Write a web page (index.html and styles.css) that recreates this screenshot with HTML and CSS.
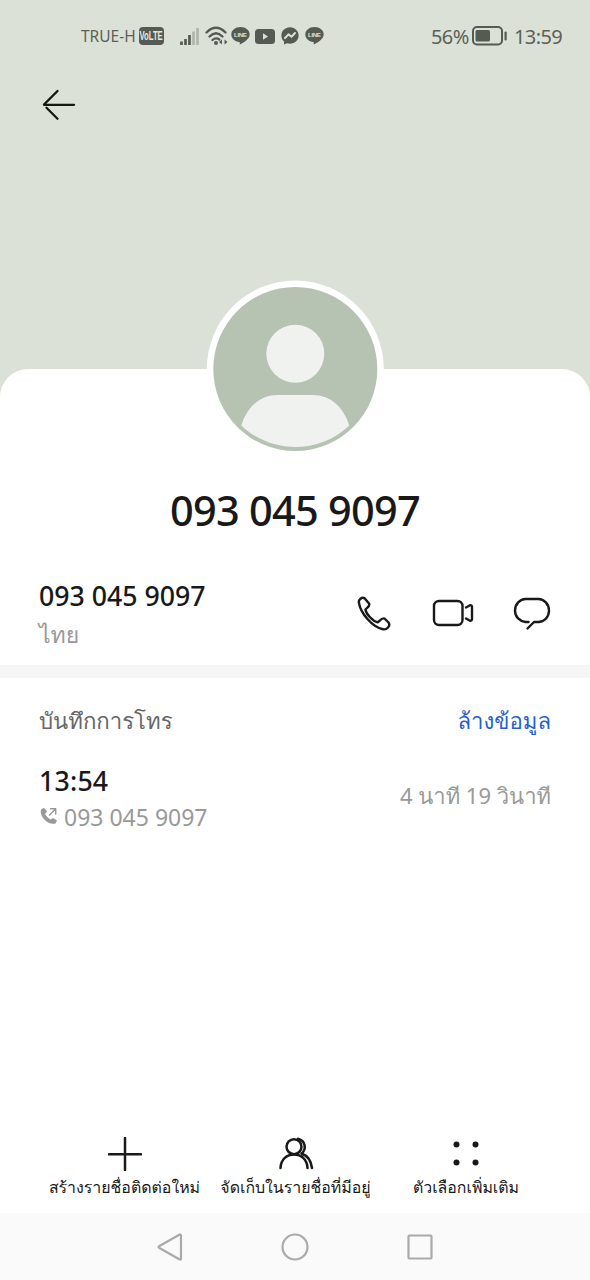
FILE: index.html
```html
<!DOCTYPE html>
<html lang="th">
<head>
<meta charset="utf-8">
<title>093 045 9097</title>
<link rel="stylesheet" href="styles.css">
</head>
<body>
<main class="screen">
  <header class="hero">
    <div class="status">
      <span class="carrier">TRUE-H</span>
      <span class="volte"><span>VoLTE</span></span>
      <svg class="signal" width="19" height="19" viewBox="0 0 19 19"><path d="M1.500 18v-3.500M5.500 18v-6M9.500 18V8" /><path class="faint" d="M13.500 18V4.500M17.500 18V1"/></svg>
      <svg class="wifi" width="23" height="20" viewBox="0 0 23 20"><path d="M1.500 6.500Q11 -3 20.500 6.500M4.500 10.500Q11 4 17.500 10.500M7.500 14Q11 11 14.300 13.500"/><circle cx="11" cy="17" r="2"/><path class="solid" d="M14 16l3-2.500v5zM22.500 16l-3-2.500v5z"/></svg>
      <svg class="line" width="19" height="18" viewBox="0 0 19 18"><path d="M9.500 0C4.300 0 .3 3.300.3 7.500c0 3.800 3.500 7 8 7.500.7.200.5 1.500.4 2.500 4-1.700 10-5.700 10-10C18.700 3.300 14.700 0 9.500 0z"/><text x="9.500" y="10" textLength="13">LINE</text></svg>
      <svg class="tube" width="20" height="15" viewBox="0 0 20 15"><rect width="20" height="15" rx="3.500"/><path class="cut" d="M8 4.300l5 3.200-5 3.200z"/></svg>
      <svg class="mess" width="18" height="18" viewBox="0 0 18 18"><path d="M9 .2C4 .2.400 3.800.400 8.500c0 2.500 1 4.500 2.600 6V17.500l2.800-1.300c1 .3 2 .5 3.200.5 5 0 8.600-3.600 8.600-8.200S14 .2 9 .2z"/><path class="stroke" d="M4 11l3.500-3.600 3 2.300L14 6"/></svg>
      <svg class="line" width="19" height="18" viewBox="0 0 19 18"><path d="M9.500 0C4.300 0 .3 3.300.3 7.500c0 3.800 3.500 7 8 7.500.7.200.5 1.500.4 2.500 4-1.700 10-5.700 10-10C18.700 3.300 14.700 0 9.500 0z"/><text x="9.500" y="10" textLength="13">LINE</text></svg>
      <span class="percent">56%</span>
      <svg class="battery" width="36" height="20" viewBox="0 0 36 20"><rect class="case" x="1" y="1" width="29" height="17.500" rx="4"/><rect x="3.500" y="4" width="14.500" height="11.500" rx="1.500"/><rect x="32.500" y="5.500" width="2.200" height="9" rx="1"/></svg>
      <span class="clock">13:59</span>
    </div>
    <svg class="back" width="34" height="32" viewBox="0 0 34 32"><path d="M2 15.800H32M15.500 2L2 15.500M4.500 18.800l11 11"/></svg>
  </header>
  <section class="sheet">
    <svg class="avatar" width="178" height="178" viewBox="0 0 178 178"><circle class="ring" cx="89.300" cy="89" r="88.500"/><circle class="disc" cx="89.300" cy="89" r="82"/><circle class="figure" cx="89.300" cy="73.700" r="29"/><path class="figure" d="M35.300 145.500C41.300 126 55.300 115 71.300 115h36c16 0 30 11 36 30.500C128.300 160 108.300 167 89.300 167s-39-7-54-21.500z"/></svg>
    <h1 class="title"><span>093 045 9097</span></h1>
    <div class="contact">
      <div class="who"><div class="number">093 045 9097</div><div class="country">ไทย</div></div>
      <svg class="act" width="36" height="36" viewBox="0 0 36 36"><path d="M3 7C2 4 6 0 9 2.700L13 7.500C14.500 10 11.500 11.300 9.500 13.500C10 18 17 25.300 21.700 26.300C24 24.500 26 21.500 28.500 22.500L32.500 26.500C35 30 30.500 34 27 33.300C16 31 4.500 17 3 7Z"/></svg>
      <svg class="act camera" width="42" height="28" viewBox="0 0 42 28"><rect x="2" y="2" width="28.500" height="24" rx="5"/><path d="M34 8.500L38 6.200Q40 6 40 8V20Q40 22 38 21.800L34 19.500"/></svg>
      <svg class="act bubble" width="38" height="34" viewBox="0 0 38 34"><path d="M15.500 25H12.500C6 24 2 19.500 2 13.800C2 7.200 7 2 12.500 2H25.500C31 2 36 7.200 36 13.800C36 20 31 25 25.500 25H21L14.500 31.500"/></svg>
    </div>
  </section>
  <section class="log">
    <div class="loghead"><span class="logtitle">บันทึกการโทร</span><span class="clear">ล้างข้อมูล</span></div>
    <div class="entry">
      <div><div class="time">13:54</div>
      <div class="called"><svg width="18" height="18" viewBox="0 0 18 18"><path class="hand" d="M1 2.500L4 .8 7 4.500 5 7.300Q7 11 10.500 12.500L13 11 17 13.500 15.500 16.500C8 18.500-1 9.500 1 2.500z"/><path class="arrow" d="M9.500 8L15.500 2M10.500 1.800h5.200V7"/></svg><span>093 045 9097</span></div></div>
      <div class="duration">4 นาที 19 วินาที</div>
    </div>
  </section>
  <footer class="actions">
    <div class="action"><svg width="34" height="34" viewBox="0 0 34 34"><path d="M17 1V33M1 17.300H15M19 17.300H33"/></svg><span class="label l1">สร้างรายชื่อติดต่อใหม่</span></div>
    <div class="action"><svg width="36" height="34" viewBox="0 0 36 34"><circle cx="16" cy="9.700" r="7.500"/><path d="M2.500 31C3 22 9 17.500 16 17.500S29 22 29.500 31M20 1.800C28 4 28.500 12.500 23.500 16.500C29 18.500 33 23 34 31"/></svg><span class="label l2">จัดเก็บในรายชื่อที่มีอยู่</span></div>
    <div class="action"><svg class="dots" width="34" height="34" viewBox="0 0 34 34"><circle cx="7.500" cy="7.500" r="3"/><circle cx="26.500" cy="7.500" r="3"/><circle cx="7.500" cy="25.500" r="3"/><circle cx="26.500" cy="25.500" r="3"/></svg><span class="label l3">ตัวเลือกเพิ่มเติม</span></div>
  </footer>
  <nav class="nav">
    <svg width="28" height="28" viewBox="0 0 28 28"><path d="M25 2.200V25.800Q24.500 27 23.300 26.300L3 14.700Q2 14 3 13.300L23.300 1.700Q24.500 1 25 2.200z"/></svg>
    <svg width="28" height="28" viewBox="0 0 28 28"><circle cx="14" cy="14" r="12.500"/></svg>
    <svg width="28" height="28" viewBox="0 0 28 28"><rect x="2.500" y="2.500" width="23" height="23" rx="1"/></svg>
  </nav>
</main>
</body>
</html>
```
FILE: styles.css
```css
* { box-sizing: border-box; }
body { margin: 0; font-family: "Noto Sans", "Loma", sans-serif; color: #191919; background: #fff; }
svg { display: block; flex: none; fill: none; stroke-linecap: round; stroke-linejoin: round; }
span, .number, .country, .time, .duration { white-space: nowrap; }
.screen { width: 590px; height: 1280px; display: flex; flex-direction: column; overflow: hidden; background: #fff; }
.hero { height: 369px; flex: none; background: #dbe1d6; }
.status { height: 72px; padding-left: 81px; display: flex; align-items: center; color: #5b6158; }
.status svg { fill: #555b53; stroke: none; }
.carrier { width: 58px; font-size: 15.500px; line-height: 18px; padding-bottom: 1px; }
.volte { width: 25px; height: 18px; margin-right: 16px; border-radius: 4px; background: #555b53; color: #e5eae1; font: bold 12px/18px "Liberation Sans", sans-serif; display: flex; justify-content: center; }
.volte span { transform: scaleX(0.640); }
.status .signal { margin: 0 6px 0 0; stroke: #555b53; stroke-width: 2.700; stroke-linecap: butt; }
.status .signal .faint { stroke: #b0b6ac; }
.status .wifi { margin-right: 3px; }
.status .wifi path { fill: none; stroke: #555b53; stroke-width: 2.300; }
.status .wifi .solid { fill: #555b53; stroke: none; }
.line { margin-right: 5px; }
.line text { fill: #dbe1d6; font: bold 6.200px "Liberation Sans", sans-serif; text-anchor: middle; }
.tube { margin-right: 6px; }
.status .cut { fill: #dbe1d6; }
.mess { margin-right: 6px; }
.status .stroke { fill: none; stroke: #dbe1d6; stroke-width: 2; }
.percent { margin-left: 102px; width: 41px; font-size: 20px; letter-spacing: -0.600px; }
.status .battery .case { fill: none; stroke: #555b53; stroke-width: 2; }
.battery { margin-right: 6px; }
.clock { font-size: 20px; letter-spacing: -0.600px; }
.back { margin: 17px 0 0 42px; stroke: #111a10; stroke-width: 2.300; }
.sheet { height: 296px; flex: none; background: linear-gradient(#dbe1d6 30px, #fff 30px); position: relative; display: flex; flex-direction: column; align-items: center; }
.sheet::before { content: ""; position: absolute; inset: 0; background: #fff; border-radius: 28px 28px 0 0; }
.avatar { position: relative; margin-top: -89px; }
.ring { fill: #fff; }
.disc { fill: #b6c2b2; }
.figure { fill: #f0f2ef; }
.title { position: relative; margin: 22px 0 0; height: 60px; font-size: 41.500px; line-height: 60px; font-weight: 500; letter-spacing: -0.750px; white-space: nowrap; }
.contact { position: relative; width: 100%; height: 95px; margin-top: 36px; padding: 0 39px; display: flex; align-items: flex-start; }
.who { flex: 1; }
.number { height: 40px; line-height: 40px; font-size: 26.700px; font-weight: 500; }
.country { height: 40px; line-height: 37px; font-size: 23px; color: #999; }
.act { stroke: #191919; stroke-width: 2.400; margin: 20px -2px 0 42px; }
.act.camera { margin: 23px 0 0 42px; }
.act.bubble { margin: 21px 0 0 39px; }
.log { flex: 1; border-top: 13px solid #f6f6f6; padding: 22px 39px 0; }
.loghead { display: flex; justify-content: space-between; height: 40px; line-height: 41px; font-size: 22.200px; color: #666; }
.clear { color: #1f5fd0; }
.entry { display: flex; justify-content: space-between; margin-top: 21px; }
.time { height: 40px; font-size: 26.700px; line-height: 40px; font-weight: 500; letter-spacing: 0.200px; }
.called { display: flex; align-items: center; gap: 6px; height: 32px; line-height: 32px; font-size: 23px; color: #999; }
.called svg { margin: -2px 0 0 1px; }
.hand { fill: #999; }
.arrow { stroke: #999; stroke-width: 1.500; }
.duration { font-size: 22px; line-height: 69px; color: #999; }
.actions { height: 80px; flex: none; padding: 0 39px; display: grid; grid-template-columns: 171px 171px 170px; }
.action { display: flex; flex-direction: column; align-items: center; padding-top: 4px; }
.action svg { stroke: #191919; stroke-width: 2.500; }
.action .dots { fill: #191919; stroke: none; }
.label { height: 30px; line-height: 32px; font-size: 15.900px; }
.nav { height: 67px; flex: none; padding: 0 156px; background: #fafafa; display: flex; justify-content: space-between; align-items: center; }
.nav svg { stroke: #aaa; stroke-width: 2.200; }
```
